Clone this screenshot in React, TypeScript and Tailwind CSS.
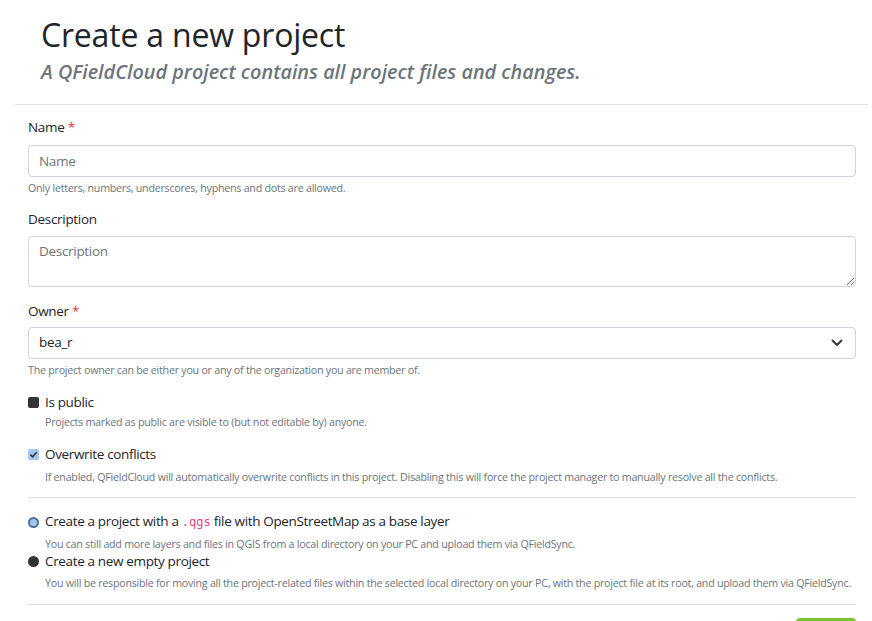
import React from 'react'

const font = { fontFamily: '"Open Sans", "Noto Sans", sans-serif' }

function Help({ children, className = '' }: { children: React.ReactNode; className?: string }) {
  return <p className={`text-[10.7px] leading-[16.5px] tracking-[-0.25px] text-[#6c757d] ${className}`}>{children}</p>
}

function Label({ children, required, className = '' }: { children: React.ReactNode; required?: boolean; className?: string }) {
  return (
    <label className={`block text-[13.5px] leading-[21px] tracking-[-0.3px] text-[#212529] ${className}`}>
      {children}
      {required && <span className="text-[#dc3545]"> *</span>}
    </label>
  )
}

function CheckRow({ checked, label, help, className = '', helpClass = '' }: { checked: boolean; label: string; help: string; className?: string; helpClass?: string }) {
  return (
    <div className={className}>
      <div className="flex items-center text-[13.5px] leading-[21px] tracking-[-0.35px] text-[#212529]">
        {checked ? (
          <span className="w-[11px] h-[11px] rounded-[2px] bg-[#a3c6f2] flex items-center justify-center mr-[6px]">
            <svg width="9" height="9" viewBox="0 0 10 10">
              <path d="M1.5 5.2 L4 7.5 L8.5 2.5" fill="none" stroke="#333" strokeWidth="1.8" />
            </svg>
          </span>
        ) : (
          <span className="w-[11px] h-[11px] rounded-[2px] bg-[#333333] mr-[6px]" />
        )}
        <span>{label}</span>
      </div>
      <Help className={`pl-[17px] ${helpClass}`}>{help}</Help>
    </div>
  )
}

function RadioRow({ selected, children, help, className = '', helpClass = '' }: { selected: boolean; children: React.ReactNode; help: string; className?: string; helpClass?: string }) {
  return (
    <div className={className}>
      <div className="flex items-center text-[13.5px] leading-[21px] tracking-[-0.35px] text-[#212529]">
        {selected ? (
          <span className="w-[11px] h-[11px] rounded-full border-[2px] border-[#4b6e95] bg-[#a6c8f0] mr-[6px]" />
        ) : (
          <span className="w-[11px] h-[11px] rounded-full bg-[#333333] mr-[6px]" />
        )}
        <span>{children}</span>
      </div>
      <Help className={`pl-[17px] ${helpClass}`}>{help}</Help>
    </div>
  )
}

export default function App() {
  return (
    <div className="w-[872px] h-[621px] overflow-hidden bg-white pl-[15px] pr-[4px]" style={font}>
      <div className="pl-[26px] pt-[16px]">
        <h1 className="text-[32px] leading-[38px] text-[#212529] font-medium tracking-[-0.2px]">Create a new project</h1>
        <p className="mt-[6px] text-[19.8px] leading-[24px] italic font-semibold text-[#6c757d]">
          A QFieldCloud project contains all project files and changes.
        </p>
      </div>
      <hr className="mt-[20px] border-t border-[#dee2e6]" />

      <form className="pl-[13px] pr-[12px]">
        <Label required className="mt-[12px]">Name</Label>
        <input
          className="mt-[7px] block w-full h-[32px] px-[10px] text-[13.5px] tracking-[-0.3px] border border-[#ced4da] rounded-[4px] placeholder-[#6c757d] outline-none"
          placeholder="Name"
        />
        <Help className="mt-[3px]">Only letters, numbers, underscores, hyphens and dots are allowed.</Help>

        <Label className="mt-[12px]">Description</Label>
        <textarea
          className="mt-[6px] block w-full h-[51px] px-[10px] pt-[4px] text-[13.5px] tracking-[-0.3px] leading-[21px] border border-[#ced4da] rounded-[4px] placeholder-[#6c757d] outline-none resize-y"
          placeholder="Description"
        />

        <Label required className="mt-[14px]">Owner</Label>
        <div className="mt-[5px] flex items-center justify-between h-[32px] pl-[10px] pr-[12px] border border-[#ced4da] rounded-[4px] text-[13.5px] tracking-[-0.3px] text-[#212529]">
          <span>bea_r</span>
          <svg width="12" height="8" viewBox="0 0 12 8">
            <path d="M1.5 1.5 L6 6 L10.5 1.5" fill="none" stroke="#343a40" strokeWidth="2" strokeLinecap="round" strokeLinejoin="round" />
          </svg>
        </div>
        <Help className="mt-[3px]">The project owner can be either you or any of the organization you are member of.</Help>

        <CheckRow
          className="mt-[14px]"
          helpClass="mt-[1px]"
          checked={false}
          label="Is public"
          help="Projects marked as public are visible to (but not editable by) anyone."
        />
        <CheckRow
          className="mt-[13px]"
          helpClass="mt-[4px]"
          checked={true}
          label="Overwrite conflicts"
          help="If enabled, QFieldCloud will automatically overwrite conflicts in this project. Disabling this will force the project manager to manually resolve all the conflicts."
        />

        <hr className="mt-[12px] border-t border-[#dee2e6]" />

        <RadioRow
          className="mt-[13px]"
          helpClass="mt-[3px]"
          selected={true}
          help="You can still add more layers and files in QGIS from a local directory on your PC and upload them via QFieldSync."
        >
          Create a project with a{' '}
          <code className="text-[12px] tracking-normal text-[#e83e8c]" style={{ fontFamily: '"DejaVu Sans Mono", monospace' }}>.qgs</code>{' '}
          file with OpenStreetMap as a base layer
        </RadioRow>
        <RadioRow
          className="mt-[-2px]"
          helpClass="mt-[3px]"
          selected={false}
          help="You will be responsible for moving all the project-related files within the selected local directory on your PC, with the project file at its root, and upload them via QFieldSync."
        >
          Create a new empty project
        </RadioRow>

        <hr className="mt-[13px] border-t border-[#dee2e6]" />
        <div className="flex justify-end mt-[13px]">
          <div className="w-[60px] h-[10px] rounded-t-[4px] bg-[#7cc532]" />
        </div>
      </form>
    </div>
  )
}
